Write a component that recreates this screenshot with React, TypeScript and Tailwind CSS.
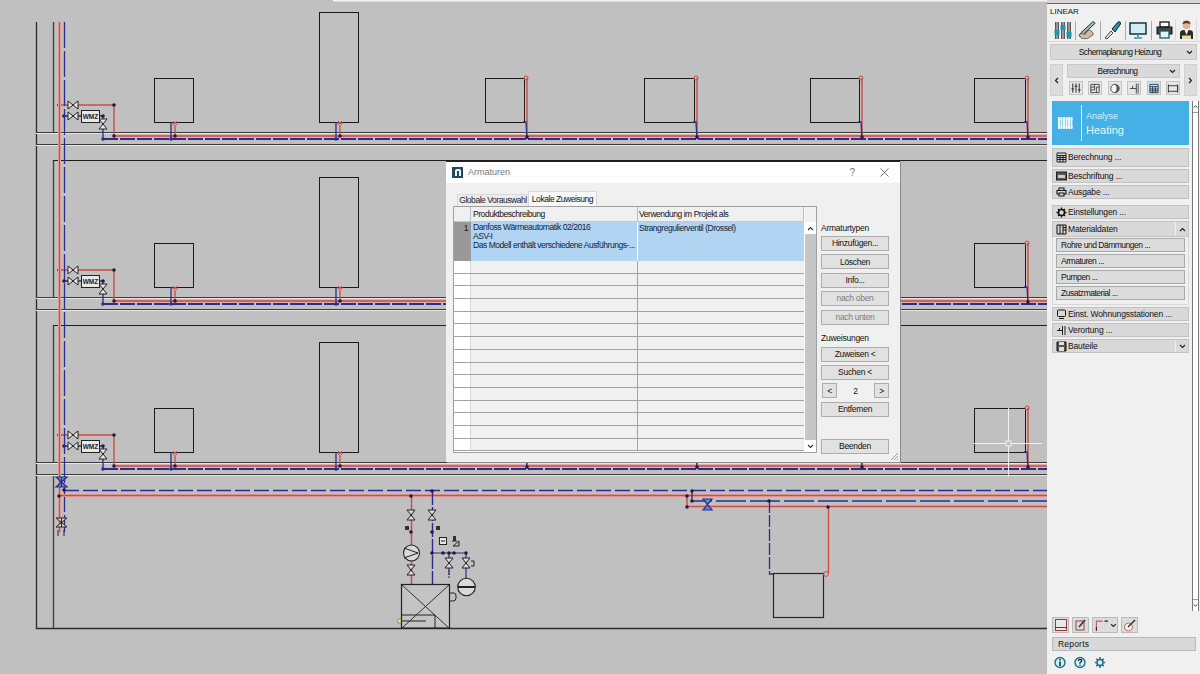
import * as React from "react";

const RED = "#d04a46";
const BLUE = "#2c2c8c";
const radiators = [
  { x: 154, w: 39, kind: "low" },
  { x: 319, w: 39, kind: "tall" },
  { x: 485, w: 39, kind: "side" },
  { x: 644, w: 50, kind: "side" },
  { x: 810, w: 49, kind: "side" },
  { x: 974, w: 51, kind: "side" },
];

function Valve({ x, y, horizontal, color = "#222", fill = "#d8d8d8" }: { x: number; y: number; horizontal?: boolean; color?: string; fill?: string }) {
  const pts = horizontal
    ? `${x - 5},${y - 4} ${x + 5},${y + 4} ${x + 5},${y - 4} ${x - 5},${y + 4}`
    : `${x - 4},${y - 5} ${x + 4},${y - 5} ${x - 4},${y + 5} ${x + 4},${y + 5}`;
  return <polygon points={pts} fill={fill} stroke={color} strokeWidth="1" />;
}

function Dot({ x, y, c = "#2a1a3a" }: { x: number; y: number; c?: string }) {
  return <circle cx={x} cy={y} r="1.8" fill={c} />;
}

function Floor({ dy }: { dy: number }) {
  return (
    <g transform={`translate(0 ${dy})`}>
      <path d="M36 132.5H1047M36 144.5H1047" stroke="#3c3c3c" strokeWidth="1" />
      <path d="M36 133.5H1047M36 145.5H1047" stroke="#e6e6e6" strokeWidth="1" />
      <path d="M114 136H1047" stroke="#e3a9a6" strokeWidth="3" />
      <path d="M114 136H1047" stroke={RED} strokeWidth="1.4" />
      <path d="M103 139H1047" stroke={BLUE} strokeWidth="1.8" strokeDasharray="15 2" />
      <path d="M59 105H114V136" fill="none" stroke={RED} strokeWidth="1.4" />
      <path d="M64 116H82M99 116H103V139" fill="none" stroke={BLUE} strokeWidth="1.3" />
      <Dot x={59} y={105} />
      <Dot x={114} y={105} />
      <Dot x={64} y={116} />
      <Dot x={103} y={116} />
      <Dot x={114} y={136} />
      <Dot x={103} y={139} c={BLUE} />
      <Valve x={73} y={105} horizontal fill="#e8e8e8" />
      <Valve x={73} y={116} horizontal fill="#e8e8e8" />
      <Valve x={103} y={124} fill="#e8e8e8" />
      <rect x="81.5" y="110.5" width="18" height="12" fill="#e8e8e8" stroke="#222" />
      <text x="90.5" y="119" textAnchor="middle" fontFamily="Liberation Sans, sans-serif" fontSize="6.5" fontWeight="700" fill="#222">WMZ</text>
      {radiators.map((r) => {
        const top = r.kind === "tall" ? 12 : 78;
        const right = r.x + r.w + 3;
        return (
          <g key={r.x}>
            <rect x={r.x + 0.5} y={top + 0.5} width={r.w} height={122 - top} fill="none" stroke="#1a1a1a" strokeWidth="1" />
            {r.kind === "side" ? (
              <>
                <path d={`M${right} ${top}V136`} stroke={RED} strokeWidth="1.4" fill="none" />
                <circle cx={right - 1} cy={top} r="2" fill="none" stroke={RED} strokeWidth="1" />
                <path d={`M${right - 4} 122H${right - 1}L${right} 139`} stroke={BLUE} strokeWidth="1.3" fill="none" />
                <Dot x={right} y={137} />
              </>
            ) : (
              <>
                <path d={`M${r.x + 17} 122V139`} stroke={BLUE} strokeWidth="1.3" />
                <path d={`M${r.x + 21} 125V136`} stroke={RED} strokeWidth="1.3" />
                <path d={`M${r.x + 18} 123H${r.x + 24}M${r.x + 19} 121L${r.x + 23} 125M${r.x + 23} 121L${r.x + 19} 125`} stroke={RED} strokeWidth="0.9" />
                <Dot x={r.x + 17} y={139} c={BLUE} />
                <Dot x={r.x + 21} y={136} />
              </>
            )}
          </g>
        );
      })}
    </g>
  );
}

function Plan() {
  return (
    <svg className="absolute inset-0" width="1047" height="674" viewBox="0 0 1047 674">
      <rect x="333" y="0" width="714" height="1.5" fill="#f4f4f4" />
      <path d="M36.5 22V628.5H1047" fill="none" stroke="#2c2c2c" strokeWidth="1.3" />
      <path d="M53.5 22V133M53.5 160V298M53.5 325V463M53.5 475V628" stroke="#444" strokeWidth="1.4" />
      <path d="M53 160.5H1047M53 325.5H1047" stroke="#1e1e1e" strokeWidth="1" />
      <Floor dy={0} />
      <Floor dy={165} />
      <Floor dy={330} />
      <path d="M59.5 22V532" stroke="#e3a9a6" strokeWidth="3" />
      <path d="M59.5 22V532" stroke={RED} strokeWidth="1.3" />
      <path d="M64.5 22V532" stroke={BLUE} strokeWidth="1.3" strokeDasharray="26 3" />
      <path d="M64 490.5H1047" stroke={BLUE} strokeWidth="1.4" strokeDasharray="15 4" />
      <path d="M59 495.5H1047" stroke="#e3a9a6" strokeWidth="3" />
      <path d="M59 495.5H1047" stroke={RED} strokeWidth="1.5" />
      <Dot x={64} y={490} />
      <Dot x={59} y={496} />
      <polygon points="56,477 67,477 56,487 67,487" fill="#5a8ad8" stroke={BLUE} strokeWidth="1.2" />
      <path d="M61.500 477V487" stroke={BLUE} strokeWidth="1" />
      <polygon points="56,518 67,518 56,527 67,527" fill="#d8d8d8" stroke="#222" strokeWidth="1" />
      <path d="M61.500 518V527" stroke="#222" strokeWidth="1" />
      <path d="M58 530V536M64 530V536" stroke="#222" strokeWidth="1" />
      <path d="M692 491V501H1047" fill="none" stroke={BLUE} strokeWidth="1.3" strokeDasharray="30 4" />
      <path d="M687 496V506.5H1047" fill="none" stroke={RED} strokeWidth="1.5" />
      <Dot x={692} y={491} />
      <Dot x={692} y={501} />
      <Dot x={687} y={496} />
      <Dot x={687} y={507} />
      <polygon points="703,499 712,499 703,510 712,510" fill="#5a8ad8" stroke={BLUE} strokeWidth="1.2" />
      <path d="M769.5 501V574H773" fill="none" stroke={BLUE} strokeWidth="1.3" strokeDasharray="12 2" />
      <path d="M828.5 507V573" stroke={RED} strokeWidth="1.4" />
      <Dot x={769} y={501} />
      <Dot x={828} y={507} />
      <rect x="773.5" y="573.5" width="50" height="44" fill="none" stroke="#262626" strokeWidth="1.2" />
      <circle cx="826" cy="574" r="2.4" fill="none" stroke={RED} strokeWidth="1" />

      <path d="M411.5 496V584" stroke={RED} strokeWidth="1.5" />
      <path d="M432.5 491V584" stroke={BLUE} strokeWidth="1.4" strokeDasharray="14 2" />
      <path d="M432 553H466V578M449 553V575" fill="none" stroke={BLUE} strokeWidth="1.2" />
      <Dot x={411} y={496} />
      <Dot x={432} y={491} />
      <Dot x={411} y={532} />
      <Dot x={432} y={532} />
      <Dot x={432} y={553} />
      <Dot x={443} y={553} />
      <Dot x={449} y={553} />
      <Dot x={454} y={553} />
      <Dot x={466} y={553} />
      <Valve x={411} y={515} fill="#dcdcdc" />
      <Valve x={432} y={515} fill="#dcdcdc" />
      <Valve x={411} y={570} fill="#dcdcdc" />
      <Valve x={449} y={563} fill="#dcdcdc" />
      <Valve x={466} y={563} fill="#dcdcdc" />
      <rect x="405" y="526" width="4" height="4" fill="#333" />
      <rect x="436" y="526" width="4" height="4" fill="#333" />
      <rect x="439.5" y="537.5" width="7" height="7" fill="#e6e6e6" stroke="#222" />
      <path d="M441 541H445" stroke="#222" />
      <path d="M452 541H457M453 546L459 541V546Z" fill="none" stroke="#222" />
      <rect x="453" y="536" width="3" height="5" fill="#333" />
      <path d="M449 570V578" stroke="#333" strokeDasharray="2 1" />
      <circle cx="411.5" cy="553" r="8" fill="#d8d8d8" stroke="#222" strokeWidth="1.1" />
      <path d="M404 548L418 553L404 558" fill="none" stroke="#222" />
      <circle cx="466.5" cy="587" r="8.8" fill="#d8d8d8" stroke="#222" strokeWidth="1.1" />
      <path d="M458 587H475" stroke="#222" strokeWidth="2" />
      <path d="M471 561H474V566H471" fill="none" stroke="#222" />
      <rect x="401.5" y="584.5" width="48" height="43.5" fill="#c4c4c4" stroke="#222" strokeWidth="1.2" />
      <path d="M402 585L449 628M449 585L402 628" stroke="#222" strokeWidth="0.9" />
      <path d="M402 615H435V628" fill="none" stroke="#222" />
      <path d="M400 621H426" stroke="#222" strokeWidth="1" />
      <rect x="398" y="619" width="3" height="4" fill="#f4f080" stroke="#555" strokeWidth="0.5" />
      <path d="M449 593H454Q456 593 456 596V598Q456 601 453 601H449" fill="none" stroke="#222" />

      <path d="M974 443.5H1042M1008.5 408V477" stroke="#f2f2f2" strokeWidth="1" />
      <rect x="1006" y="441" width="5" height="5" fill="#c0c0c0" stroke="#f2f2f2" />
    </svg>
  );
}

function DialogButton({ label, disabled, className = "" }: { label: string; disabled?: boolean; className?: string }) {
  return (
    <div className={`flex h-[15px] items-center justify-center border border-[#adadad] bg-[#e1e1e1] tracking-[-0.3px] whitespace-nowrap ${disabled ? "text-[#7d7d7d]" : "text-[#111]"} ${className}`}>
      {label}
    </div>
  );
}

function Dialog() {
  return (
    <div className="absolute left-[446px] top-[161px] flex h-[301px] w-[454px] flex-col border-t border-[#222] bg-[#f0f0f0] text-[8.5px] leading-none shadow-[1px_1px_0_#8a8a8a]">
      <div className="flex h-[21px] items-center bg-white pl-[6px] pr-[11px]">
        <svg width="11" height="11" viewBox="0 0 11 11">
          <rect width="11" height="11" fill="#1f4a5c" />
          <path d="M3 9V3.5Q3 2 5 2H7.5Q9 2 9 4V9H7V4H5V9Z" fill="#f2f2f2" />
        </svg>
        <span className="ml-[5px] text-[9px] text-[#777]">Armaturen</span>
        <span className="ml-auto text-[10px] text-[#777]">?</span>
        <svg className="ml-[25px]" width="9" height="9" viewBox="0 0 9 9">
          <path d="M0.5 0.5L8.5 8.5M8.5 0.5L0.5 8.5" stroke="#666" strokeWidth="0.9" />
        </svg>
      </div>
      <div className="flex flex-1 pl-[7px] pt-[8px]">
        <div className="flex w-[364px] flex-col">
          <div className="flex h-[15px] items-end pl-[4px] tracking-[-0.45px] whitespace-nowrap">
            <div className="flex h-[12px] w-[71px] items-center justify-center border-t border-l border-[#d8d8d8] bg-[#ececec] text-[#222]">Globale Vorauswahl</div>
            <div className="flex h-[15px] w-[69px] items-center justify-center border-x border-t border-[#d8d8d8] bg-[#f8f8f8] text-[#111]">Lokale Zuweisung</div>
          </div>
          <div className="flex h-[247px] border border-[#a0a0a0] bg-white tracking-[-0.45px] whitespace-nowrap">
            <div className="flex w-[350px] flex-col">
              <div className="flex h-[15px] border-b border-[#c8c8c8] bg-[#f0f0f0] text-[#111]">
                <div className="w-[17px] border-r border-[#bdbdbd]" />
                <div className="flex w-[167px] items-center border-r border-[#bdbdbd] pl-[2px]">Produktbeschreibung</div>
                <div className="flex flex-1 items-center border-r border-[#bdbdbd] pl-[1px]">Verwendung im Projekt als</div>
              </div>
              <div className="flex h-[39px] bg-[#b1d4f2] text-[#10233c]">
                <div className="w-[17px] bg-[#999] pr-[3px] pt-[2px] text-right text-[#111]">1</div>
                <div className="flex w-[167px] flex-col border-r border-white pl-[2px] pt-[1px] leading-[9px]">
                  <span>Danfoss Wärmeautomatik 02/2016</span>
                  <span>ASV-I</span>
                  <span>Das Modell enthält verschiedene Ausführungs-...</span>
                </div>
                <div className="flex-1 pl-[1px] pt-[2px]">Strangregulierventil (Drossel)</div>
              </div>
              <div className="flex flex-1 flex-col overflow-hidden">
                {Array.from({ length: 15 }).map((_, i) => (
                  <div key={i} className="flex h-[12.7px] shrink-0 border-b border-[#a2a2a2] bg-[#f0f0f0]">
                    <div className="w-[17px] border-r border-[#d8d8d8] bg-white" />
                    <div className="w-[167px] border-r border-[#a2a2a2]" />
                    <div className="flex-1" />
                  </div>
                ))}
              </div>
            </div>
            <div className="flex flex-1 flex-col border-l border-white bg-[#c6c6c6]">
              <div className="flex h-[15px] bg-[#f0f0f0]" />
              <div className="flex h-[12px] items-center justify-center bg-white">
                <svg width="7" height="5" viewBox="0 0 7 5"><path d="M1 4L3.5 1.5L6 4" fill="none" stroke="#333" strokeWidth="1.1" /></svg>
              </div>
              <div className="flex-1" />
              <div className="flex h-[12px] items-center justify-center bg-white">
                <svg width="7" height="5" viewBox="0 0 7 5"><path d="M1 1L3.5 3.5L6 1" fill="none" stroke="#333" strokeWidth="1.1" /></svg>
              </div>
            </div>
          </div>
        </div>
        <div className="ml-[4px] flex w-[68px] flex-col pt-[33px]">
          <div className="h-[12px] tracking-[-0.25px] text-[#111]">Armaturtypen</div>
          <div className="flex flex-col gap-[3.4px]">
            <DialogButton label="Hinzufügen..." />
            <DialogButton label="Löschen" />
            <DialogButton label="Info..." />
            <DialogButton label="nach oben" disabled />
            <DialogButton label="nach unten" disabled />
          </div>
          <div className="mt-[9px] h-[13px] tracking-[-0.25px] text-[#111]">Zuweisungen</div>
          <div className="flex flex-col gap-[3.4px]">
            <DialogButton label="Zuweisen <" />
            <DialogButton label="Suchen <" />
            <div className="flex h-[15px] items-center justify-between pl-[1px] text-[#111]">
              <DialogButton label="<" className="w-[15px]" />
              <span>2</span>
              <DialogButton label=">" className="w-[15px]" />
            </div>
            <DialogButton label="Entfernen" />
          </div>
          <DialogButton label="Beenden" className="mt-[22px]" />
        </div>
      </div>
      <svg className="absolute bottom-[1px] right-[1px]" width="9" height="9" viewBox="0 0 9 9">
        <path d="M1 8L8 1M4 8L8 4M7 8L8 7" stroke="#999" strokeWidth="1" />
      </svg>
    </div>
  );
}

const Chevron = ({ up }: { up?: boolean }) => (
  <svg width="7" height="5" viewBox="0 0 7 5">
    <path d={up ? "M1 4L3.5 1.5L6 4" : "M1 1L3.5 3.5L6 1"} fill="none" stroke="#222" strokeWidth="1.2" />
  </svg>
);

function TabIcons() {
  return (
    <div className="flex h-[23px] items-center border-b border-[#d8d8d8] pl-[7px]">
      <svg width="18" height="19" viewBox="0 0 18 19">
        <path d="M3 1V18M9 1V18M15 1V18" stroke="#1c1c1c" strokeWidth="3.4" />
        <path d="M3 1V18M9 1V18M15 1V18" stroke="#e2e8ea" strokeWidth="1.2" />
        <rect x="0.5" y="9" width="5" height="5" fill="#1f95b0" />
        <rect x="6.5" y="4" width="5" height="5" fill="#1f95b0" />
        <rect x="12.5" y="11" width="5" height="5" fill="#1f95b0" />
      </svg>
      <div className="ml-[3px] h-[19px] w-px bg-[#aaa]" />
      <svg className="ml-[1px]" width="20" height="20" viewBox="0 0 21 20">
        <path d="M4 13L5 16L19 3L17 1Z" fill="#9ac0a8" stroke="#222" strokeWidth="1" />
        <path d="M4 13L5 16L2 17Z" fill="#222" />
        <path d="M2 15Q6 12 8 15L12 10Q17 11 17 15L11 19H5Z" fill="#d6b9a6" stroke="#444" strokeWidth="0.8" />
      </svg>
      <div className="ml-[3px] h-[19px] w-px bg-[#aaa]" />
      <svg className="ml-[3px]" width="18" height="20" viewBox="0 0 18 20">
        <path d="M8 9L14 2Q17 1 16.500 4L11 12Z" fill="#1f95b0" stroke="#123" strokeWidth="1" />
        <path d="M1 18L7 11L9 13L3 19Z" fill="#ddd" stroke="#222" strokeWidth="0.8" />
      </svg>
      <div className="ml-[3px] h-[19px] w-px bg-[#aaa]" />
      <svg className="ml-[3px]" width="18" height="18" viewBox="0 0 18 18">
        <rect x="1" y="2" width="16" height="11" fill="#cfeef2" stroke="#123" strokeWidth="1.4" />
        <path d="M9 13V16M5 17H13" stroke="#1f95b0" strokeWidth="1.6" />
      </svg>
      <div className="ml-[4px] h-[19px] w-px bg-[#aaa]" />
      <svg className="ml-[4px]" width="17" height="18" viewBox="0 0 17 18">
        <rect x="4" y="1" width="9" height="5" fill="#fff" stroke="#111" strokeWidth="1.3" />
        <rect x="1" y="6" width="15" height="7" fill="#444" stroke="#111" />
        <rect x="4" y="10" width="9" height="7" fill="#dff3f6" stroke="#1b5b6b" strokeWidth="1.3" />
      </svg>
      <div className="ml-[2px] flex h-[23px] w-[22px] items-center justify-center border-x border-[#d8d8d8]">
        <svg width="15" height="20" viewBox="0 0 15 20">
          <circle cx="7.5" cy="5" r="4" fill="#e3b48e" />
          <path d="M3.5 4Q4 0.5 7.5 0.8Q11 0.5 11.5 4Q8 2.5 3.5 4Z" fill="#5c3a1e" />
          <path d="M1 19V13Q1 10 5 10H10Q14 10 14 13V19Z" fill="#2b2b2b" />
          <path d="M5.5 10H9.5L7.5 15Z" fill="#f3f3f3" />
          <rect x="3" y="15.5" width="9" height="3.5" fill="#e6d9a8" />
        </svg>
      </div>
    </div>
  );
}

const miniIcons = [
  <path key="a" d="M3 1V11M6.5 1V11M10 1V11M1.5 7H4.5M5 4H8M8.5 8H11.5" stroke="#222" strokeWidth="1" fill="none" />,
  <path key="b" d="M2 2H11V11H2ZM2 5H6V8H2M6 2V5M8 5H11M8 5V11" stroke="#333" strokeWidth="0.9" fill="none" />,
  <g key="c"><circle cx="6.5" cy="6.5" r="4.6" fill="#f4f4f4" stroke="#444" strokeWidth="1" /><path d="M6.5 2A4.5 4.5 0 0 1 6.5 11A7 7 0 0 0 6.5 2Z" fill="#555" /></g>,
  <path key="d" d="M9 1V12M11 1V12M2 6.5H9M5 3.5V6.5" stroke="#333" strokeWidth="0.9" fill="none" />,
  <path key="e" d="M2 2H11V11H2ZM2 4.5H11M2 7H11M2 9H11M5 4.5V11M8 4.5V11" stroke="#1c2c3c" strokeWidth="0.9" fill="none" />,
  <path key="f" d="M1.5 2V11M11.5 2V11M1.5 3.5H11.5V9.5H1.5" stroke="#333" strokeWidth="1" fill="none" />,
];

function MiniBox({ i, active }: { i: number; active?: boolean }) {
  return (
    <div className={`flex h-[14px] w-[14px] items-center justify-center border border-[#c4c4c4] ${active ? "bg-[#cfe2f0]" : "bg-[#e6e6e6]"}`}>
      <svg width="13" height="13" viewBox="0 0 13 13">{miniIcons[i]}</svg>
    </div>
  );
}

function SideButton({ label, h = 14, icon, chevron, up, className = "" }: { label: string; h?: number; icon: React.ReactNode; chevron?: boolean; up?: boolean; className?: string }) {
  return (
    <div className={`flex items-center border border-[#c2c2c2] bg-[#d9d9d9] pl-[2px] text-[#111] ${className}`} style={{ height: h }}>
      <span className="flex w-[12px] shrink-0 items-center justify-center">{icon}</span>
      <span className="ml-[1px] tracking-[-0.15px] whitespace-nowrap">{label}</span>
      {chevron && (
        <span className="ml-auto flex h-full w-[13px] items-center justify-center border-l border-[#efefef]">
          <Chevron up={up} />
        </span>
      )}
    </div>
  );
}

function SubButton({ label }: { label: string }) {
  return <div className="flex h-[14px] items-center border border-[#a8a8a8] bg-[#dcdcdc] pl-[4px] tracking-[-0.48px] whitespace-nowrap text-[#111]">{label}</div>;
}

function Sidebar() {
  return (
    <div className="flex h-full w-[153px] flex-col border-t-[3px] border-[#d6d6d6] bg-[#f0f0f0] font-['Liberation_Sans',sans-serif] text-[8.5px] leading-none">
      <div className="border-t border-[#666]" />
      <div className="flex h-[15px] items-center pl-[3px] text-[8px] text-[#111]">LINEAR</div>
      <TabIcons />
      <div className="relative mx-[3px] mt-[2px] flex h-[16px] items-center justify-center border border-[#c8c8c8] bg-[#d9d9d9] tracking-[-0.6px] text-[#111]">
        <span className="pr-[7px]">Schemaplanung Heizung</span>
        <span className="absolute right-[3px]"><Chevron /></span>
      </div>
      <div className="mx-[3px] mt-[4px] flex h-[32px]">
        <div className="flex w-[13px] items-center justify-center border border-[#d0d0d0] bg-[#dcdcdc]">
          <svg width="5" height="7" viewBox="0 0 5 7"><path d="M4 1L1.5 3.5L4 6" fill="none" stroke="#222" strokeWidth="1.2" /></svg>
        </div>
        <div className="mx-[4px] flex flex-1 flex-col">
          <div className="relative flex h-[14px] items-center justify-center border border-[#c8c8c8] bg-[#d9d9d9] tracking-[-0.6px] text-[#111]">
            <span className="pr-[12px]">Berechnung</span>
            <span className="absolute right-[3px]"><Chevron /></span>
          </div>
          <div className="mt-[3px] flex justify-between pl-[2px]">
            {miniIcons.map((_, i) => <MiniBox key={i} i={i} active={i === 4} />)}
          </div>
        </div>
        <div className="flex w-[13px] items-center justify-center border border-[#d0d0d0] bg-[#dcdcdc]">
          <svg width="5" height="7" viewBox="0 0 5 7"><path d="M1 1L3.5 3.5L1 6" fill="none" stroke="#222" strokeWidth="1.2" /></svg>
        </div>
      </div>
      <div className="mt-[5px] flex flex-1">
        <div className="ml-[5px] flex w-[137px] flex-col">
          <div className="flex h-[44px] items-center bg-[#45b0e6] pl-[6px] text-white">
            <svg width="16" height="14" viewBox="0 0 16 14">
              <path d="M1 1V13M3.500 1V13M6 1V13M8.500 1V13M11 1V13M13.500 1V13" stroke="#fff" strokeWidth="1.800" />
              <path d="M0 3H15M0 11H15" stroke="#fff" strokeWidth="0.800" />
            </svg>
            <div className="ml-[7px] h-[36px] w-[1px] bg-[#dff2fb]" />
            <div className="ml-[4px] flex flex-col pt-[1px]">
              <span className="text-[9px] text-[#d7eef9]">Analyse</span>
              <span className="mt-[4px] text-[11px] text-[#e8f6fc]">Heating</span>
            </div>
          </div>
          <SideButton label="Berechnung ..." h={19} className="mt-[3px]" icon={<svg width="11" height="11" viewBox="0 0 11 11"><path d="M1 1H10V10H1ZM1 3.500H10M1 5.500H10M1 7.500H10M4 3.500V10M7 3.500V10" fill="none" stroke="#111" strokeWidth="0.900" /></svg>} />
          <SideButton label="Beschriftung ..." className="mt-[2px]" icon={<svg width="11" height="10" viewBox="0 0 11 10"><rect x="0.500" y="1" width="10" height="8" fill="#555" stroke="#222" /><rect x="2" y="4" width="7" height="3" fill="#ccc" /></svg>} />
          <SideButton label="Ausgabe ..." className="mt-[2px]" icon={<svg width="11" height="10" viewBox="0 0 11 10"><path d="M3 3V1H8V3M3 7H1V3.500H10V7H8M3 6H8V9H3Z" fill="none" stroke="#111" strokeWidth="1.100" /></svg>} />
          <SideButton label="Einstellungen ..." className="mt-[6px]" icon={<svg width="11" height="11" viewBox="0 0 11 11"><circle cx="5.500" cy="5.500" r="3" fill="none" stroke="#111" strokeWidth="1.600" /><path d="M5.500 0.500V2.500M5.500 8.500V10.500M0.500 5.500H2.500M8.500 5.500H10.500M2 2L3.300 3.300M7.700 7.700L9 9M2 9L3.300 7.700M7.700 3.300L9 2" stroke="#111" strokeWidth="1.300" /></svg>} />
          <SideButton label="Materialdaten" h={16} chevron up className="mt-[2px]" icon={<svg width="11" height="11" viewBox="0 0 11 11"><path d="M1 1H10V10H1ZM4 1V10M7 1V10M7 3.500H10M7 6H10" fill="none" stroke="#111" strokeWidth="1" /></svg>} />
          <div className="flex flex-col gap-[2px] border border-t-0 border-[#d8d8d8] bg-[#f0f0f0] px-[3px] pb-[4px] pt-[1px]">
            <SubButton label="Rohre und Dämmungen ..." />
            <SubButton label="Armaturen ..." />
            <SubButton label="Pumpen ..." />
            <SubButton label="Zusatzmaterial ..." />
          </div>
          <SideButton label="Einst. Wohnungsstationen ..." className="mt-[2px]" icon={<svg width="11" height="11" viewBox="0 0 11 11"><rect x="1.500" y="1" width="8" height="6.500" rx="1" fill="none" stroke="#111" strokeWidth="1" /><path d="M3 9.500H8" stroke="#111" strokeWidth="1" /></svg>} />
          <SideButton label="Verortung ..." className="mt-[2px]" icon={<svg width="11" height="11" viewBox="0 0 11 11"><path d="M6.500 1V10M9 1V10M1 5.500H6.500M3.500 3V5.500" fill="none" stroke="#111" strokeWidth="0.900" /></svg>} />
          <SideButton label="Bauteile" chevron className="mt-[2px]" icon={<svg width="11" height="11" viewBox="0 0 11 11"><path d="M1 1H10V10H1Z" fill="#555" stroke="#111" /><rect x="3" y="1" width="5" height="3" fill="#ddd" /><rect x="3" y="6" width="5" height="4" fill="#ddd" /></svg>} />
        </div>
        <div className="ml-[3px] flex h-[510px] w-[7px] flex-col justify-between border-x border-[#777] bg-white">
          <div className="flex h-[12px] items-center justify-center border-b border-[#999]"><Chevron up /></div>
          <div className="flex h-[12px] items-center justify-center border-t border-[#999]"><Chevron /></div>
        </div>
      </div>
      <div className="mb-[4px] flex items-center gap-[3px] pl-[5px]">
        <div className="flex h-[16px] w-[17px] items-center justify-center border border-[#bbb] bg-[#dcdcdc]">
          <svg width="12" height="12" viewBox="0 0 12 12"><rect x="0.500" y="0.500" width="11" height="11" fill="#e8e8e8" stroke="#a03c3c" /><path d="M0 8.500H12" stroke="#444" /></svg>
        </div>
        <div className="flex h-[16px] w-[17px] items-center justify-center border border-[#bbb] bg-[#dcdcdc]">
          <svg width="12" height="12" viewBox="0 0 12 12"><rect x="1" y="2" width="8" height="9" fill="none" stroke="#a03c3c" /><path d="M4 8L10 1" stroke="#334" strokeWidth="1.600" /></svg>
        </div>
        <div className="flex h-[16px] w-[26px] items-center gap-[2px] border border-[#bbb] bg-[#dcdcdc] pl-[2px]">
          <svg width="14" height="12" viewBox="0 0 14 12"><path d="M1.500 12V2H8" fill="none" stroke="#c06060" strokeWidth="1.200" /><path d="M1.500 8V12M10 2H14" stroke="#222" strokeWidth="1.200" /></svg>
          <Chevron />
        </div>
        <div className="flex h-[16px] w-[17px] items-center justify-center border border-[#bbb] bg-[#dcdcdc]">
          <svg width="13" height="13" viewBox="0 0 13 13"><circle cx="5.500" cy="8" r="4" fill="#f4f4f4" stroke="#c86a5a" /><path d="M5 8L12 1" stroke="#334" strokeWidth="1.500" /></svg>
        </div>
      </div>
      <div className="ml-[5px] mr-[4px] flex h-[14px] items-center border border-[#b8b8b8] bg-[#d9d9d9] pl-[5px] tracking-[0.2px] text-[#111]">Reports</div>
      <div className="flex h-[23px] items-start gap-[8px] pl-[7px] pt-[5px]">
        <svg width="12" height="13" viewBox="0 0 12 13"><circle cx="6" cy="6.500" r="5" fill="#cfeff2" stroke="#1f6f80" strokeWidth="1.400" /><path d="M6 5.500V10M6 3V4.500" stroke="#123" strokeWidth="1.500" /></svg>
        <svg width="12" height="13" viewBox="0 0 12 13"><circle cx="6" cy="6.500" r="5" fill="#cfeff2" stroke="#1f6f80" strokeWidth="1.400" /><path d="M4.300 5Q4.500 3.300 6 3.300Q7.700 3.300 7.700 4.800Q7.700 5.800 6 6.500V7.800M6 8.700V10" fill="none" stroke="#123" strokeWidth="1.200" /></svg>
        <svg width="12" height="13" viewBox="0 0 12 13"><circle cx="6" cy="6.500" r="3" fill="#cfeff2" stroke="#1f6f80" strokeWidth="1.500" /><path d="M6 1V3M6 10V12M0.800 6.500H2.800M9.200 6.500H11.200M2.300 2.800L3.700 4.200M8.300 8.800L9.700 10.200M2.300 10.200L3.700 8.800M8.300 4.200L9.700 2.800" stroke="#1f6f80" strokeWidth="1.600" /></svg>
      </div>
    </div>
  );
}

export default function App() {
  return (
    <div className="flex h-[674px] w-[1200px] overflow-hidden font-['Liberation_Sans',sans-serif]">
      <div className="relative h-full w-[1047px] bg-[#c0c0c0]">
        <Plan />
        <Dialog />
      </div>
      <Sidebar />
    </div>
  );
}
